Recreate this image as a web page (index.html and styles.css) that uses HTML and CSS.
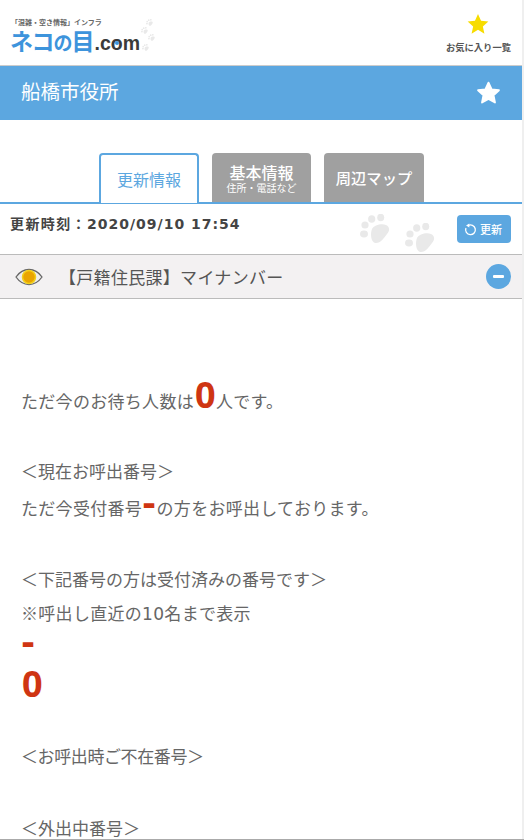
FILE: index.html
```html
<!DOCTYPE html>
<html lang="ja">

<head>
    <meta charset="UTF-8">
    <title>船橋市役所</title>
    <link rel="stylesheet" href="styles.css">
</head>

<body>
    <div class="page">
        <header class="site-header">
            <a class="logo">
                <span class="logo-sub">「混雑・空き情報」インフラ</span>
                <span class="logo-main"><span class="logo-blue">ネコ<span class="logo-no">の</span>目</span><span class="logo-dark">.c<span class="logo-o">o</span>m</span></span>
                <svg class="logo-paws" viewBox="0 0 16 34" width="16" height="34">
                    <use href="#paw" x="6" y="0" width="7" height="7"/>
                    <use href="#paw" x="1" y="8" width="7" height="7"/>
                    <use href="#paw" x="8" y="15" width="7" height="7"/>
                    <use href="#paw" x="2" y="25" width="7" height="7"/>
                </svg>
            </a>
            <a class="fav-link">
                <svg viewBox="0 0 24 24" width="22" height="22"><path d="M12 1l3.3 7.4 8 .8-6 5.4 1.7 7.9-7-4.1-7 4.1 1.7-7.9-6-5.4 8-.8z" fill="#f7dc00"/></svg>
                <span>お気に入り一覧</span>
            </a>
        </header>

        <div class="title-bar">
            <h1>船橋市役所</h1>
            <svg viewBox="0 0 24 24" width="25" height="25"><path d="M12 2.500l3 6.500 7 .8-5.200 4.800 1.400 7-6.200-3.500-6.200 3.500 1.400-7-5.200-4.800 7-.8z" fill="#fff" stroke="#fff" stroke-width="1.800" stroke-linejoin="round"/></svg>
        </div>

        <nav class="tabs">
            <a class="tab active">更新情報</a>
            <a class="tab tab-info">基本情報<small>住所・電話など</small></a>
            <a class="tab tab-map">周辺マップ</a>
        </nav>

        <div class="update-row">
            <span class="update-time"><span class="update-label">更新時刻：</span>2020/09/10 17:54</span>
            <svg class="paw paw-one" viewBox="0 0 30 30" width="30" height="30"><use href="#paw"/></svg>
            <svg class="paw paw-two" viewBox="0 0 30 30" width="30" height="30"><use href="#paw"/></svg>
            <button class="refresh-btn">
                <svg viewBox="0 0 16 16" width="13" height="13"><path d="M5 3.200a6 6 0 1 1-2.600 3" fill="none" stroke="#fff" stroke-width="1.600"/><path d="M6.500 0.500v5l-4-2.400z" fill="#fff"/></svg>
                更新
            </button>
        </div>

        <div class="section-head">
            <svg viewBox="0 0 28 18" width="28" height="18">
                <path d="M1 9c3.500-5 8-7.500 13-7.500S23.500 4 27 9c-3.500 5-8 7.500-13 7.500S4.500 14 1 9z" fill="#eee" stroke="#666" stroke-width="1.300"/>
                <circle cx="14" cy="9" r="6.500" fill="#e9a400" stroke="#f3cf1a" stroke-width="1.500"/>
            </svg>
            <span class="section-title">【戸籍住民課】マイナンバー</span>
            <span class="minus"></span>
        </div>

        <main class="content">
            <p class="line wide">ただ今のお待ち人数は<b class="num num-zero">0</b>人です。</p>
            <p class="line current">＜現在お呼出番号＞</p>
            <p class="line wide call">ただ今受付番号<b class="num">-</b>の方をお呼出しております。</p>
            <p class="line accepted">＜下記番号の方は受付済みの番号です＞</p>
            <p class="line wide note">※呼出し直近の<span class="digits">10</span>名まで表示</p>
            <p class="num-line">-</p>
            <p class="num-line num-zero zero-line">0</p>
            <p class="line absent">＜お呼出時ご不在番号＞</p>
            <p class="line out">＜外出中番号＞</p>
        </main>
    </div>

    <svg class="defs" width="0" height="0">
        <symbol id="paw" viewBox="0 0 30 30">
            <ellipse cx="5" cy="11" rx="3.600" ry="3.600" fill="#e9e9e9"/>
            <ellipse cx="11.700" cy="5" rx="3.600" ry="3.800" fill="#e9e9e9"/>
            <ellipse cx="20.700" cy="3.500" rx="3.500" ry="3.800" fill="#e9e9e9"/>
            <ellipse cx="4" cy="20" rx="4" ry="3.400" fill="#e9e9e9"/>
            <path d="M12 15C14 11 22 9 26 11C30 13 30 17 27 20C24 24 20 30 15 29C11 28 10 20 12 15z" fill="#e9e9e9"/>
        </symbol>
    </svg>
</body>

</html>
```

FILE: styles.css
```css
* {
    box-sizing: border-box;
}

html,
body {
    margin: 0;
    height: 840px;
    overflow: hidden;
}

body {
    background-color: #efefef;
    border-bottom: 1px solid #aaa;
    color: #666;
    font-family: "Noto Sans CJK JP", "Noto Sans", sans-serif;
}

.page {
    width: 522px;
    height: 839px;
    overflow: hidden;
    background-color: #fff;
}

.site-header {
    height: 66px;
    display: flex;
    justify-content: space-between;
    border-bottom: 1px solid #ccc;
    padding: 0 11px 0 10px;
}

.logo {
    position: relative;
    display: flex;
    flex-direction: column;
    padding-top: 17px;
}

.logo-sub {
    font-size: 7px;
    line-height: 10px;
    color: #666;
    font-weight: 700;
    margin-left: 1px;
}

.logo-main {
    line-height: 26px;
    font-weight: 700;
    white-space: nowrap;
}

.logo-blue {
    font-size: 23px;
    letter-spacing: -1px;
    color: #3d94dc;
}

.logo-no {
    font-size: 19px;
}

.logo-dark {
    font-family: "Liberation Sans", sans-serif;
    font-size: 19.5px;
    margin-left: 1px;
    color: #3a3a3a;
}

.logo-o {
    position: relative;
}

.logo-o:after {
    content: '';
    position: absolute;
    left: 4px;
    top: 9px;
    width: 4px;
    height: 4px;
    border-radius: 50%;
    background-color: #3d94dc;
}

.logo-paws {
    position: absolute;
    left: 130px;
    top: 19px;
}

.fav-link {
    display: flex;
    flex-direction: column;
    align-items: center;
    padding-top: 13px;
    font-size: 9.3px;
    font-weight: 700;
    color: #555;
}

.fav-link span {
    line-height: 12px;
    margin-top: 6px;
}

.title-bar {
    height: 54px;
    background-color: #5ca7e0;
    display: flex;
    align-items: center;
    justify-content: space-between;
    padding: 0 21px 1px 21px;
}

.title-bar h1 {
    margin: 0 0 4px;
    font-size: 19.5px;
    font-weight: 400;
    color: #fff;
}

.tabs {
    display: flex;
    padding: 33px 0 0 99px;
    gap: 13px;
    border-bottom: 2px solid #5ca7e0;
    height: 84px;
}

.tab {
    width: 99px;
    height: 49px;
    border-radius: 4px 4px 0 0;
    background-color: #a0a0a0;
    color: #fff;
    font-size: 16px;
    font-weight: 500;
    display: flex;
    flex-direction: column;
    align-items: center;
    justify-content: center;
    line-height: 20px;
}

.tab small {
    font-size: 10px;
    font-weight: 400;
    line-height: 12px;
}

.tab-map {
    width: 100px;
    font-size: 15.3px;
    padding-bottom: 2px;
}

.tab.active {
    width: 100px;
    height: 50px;
    background-color: #fff;
    color: #5ca7e0;
    border: 2px solid #5ca7e0;
    border-bottom: 0;
    font-weight: 400;
}

.update-row {
    position: relative;
    height: 50px;
    display: flex;
    align-items: center;
    justify-content: space-between;
    padding: 0 11px 0 10px;
}

.update-time {
    font-family: "DejaVu Sans", "Noto Sans CJK JP", sans-serif;
    font-size: 14px;
    font-weight: 700;
    color: #444;
    letter-spacing: 1px;
    margin-bottom: 12px;
}

.update-label {
    letter-spacing: 1.4px;
}

.paw {
    position: absolute;
}

.paw-one {
    left: 360px;
    top: 10px;
}

.paw-two {
    left: 405px;
    top: 19px;
}

.refresh-btn {
    display: flex;
    align-items: center;
    gap: 3px;
    width: 54px;
    height: 28px;
    padding: 0 0 0 7px;
    border: 0;
    border-radius: 4px;
    background-color: #5ca7e0;
    color: #fff;
    font-family: inherit;
    font-size: 11px;
    font-weight: 500;
}

.section-head {
    height: 45px;
    display: flex;
    align-items: center;
    background-color: #f3f1f2;
    border-top: 1px solid #bbb;
    border-bottom: 1px solid #bbb;
    padding: 0 11px 0 15px;
}

.section-title {
    flex: 1;
    margin-left: 16px;
    font-size: 17px;
    letter-spacing: 0.3px;
    color: #555;
}

.minus {
    position: relative;
    width: 25px;
    height: 25px;
    border-radius: 50%;
    background-color: #5ca7e0;
}

.minus:after {
    content: '';
    position: absolute;
    left: 7px;
    top: 11px;
    width: 11px;
    height: 3px;
    border-radius: 1px;
    background-color: #fff;
}

.content {
    padding: 84px 0 0 21px;
}

.line {
    margin: 0;
    font-size: 17px;
    line-height: 36px;
    white-space: nowrap;
}

.wide {
    letter-spacing: 0.3px;
}

.current {
    margin-top: 34px;
}

.call {
    margin-top: 1px;
}

.accepted {
    margin-top: 35px;
}

.note {
    margin-top: -2px;
    margin-bottom: -10px;
}

.absent {
    margin-top: 34px;
    letter-spacing: -0.4px;
}

.out {
    margin-top: 36px;
}

.digits {
    font-family: "DejaVu Sans", sans-serif;
}

.num {
    font-family: "DejaVu Sans", sans-serif;
    font-size: 34px;
    font-weight: 700;
    color: #cf3512;
    line-height: 0;
}

.num-line {
    margin: 0;
    font-family: "DejaVu Sans", sans-serif;
    font-size: 34px;
    font-weight: 700;
    line-height: 40px;
    color: #cf3512;
}

.zero-line {
    margin-top: 2px;
}

.num.num-zero,
.num-line.num-zero {
    font-family: "Noto Sans", sans-serif;
    font-size: 36px;
    margin-left: 1px;
}

.defs {
    position: absolute;
}
```
